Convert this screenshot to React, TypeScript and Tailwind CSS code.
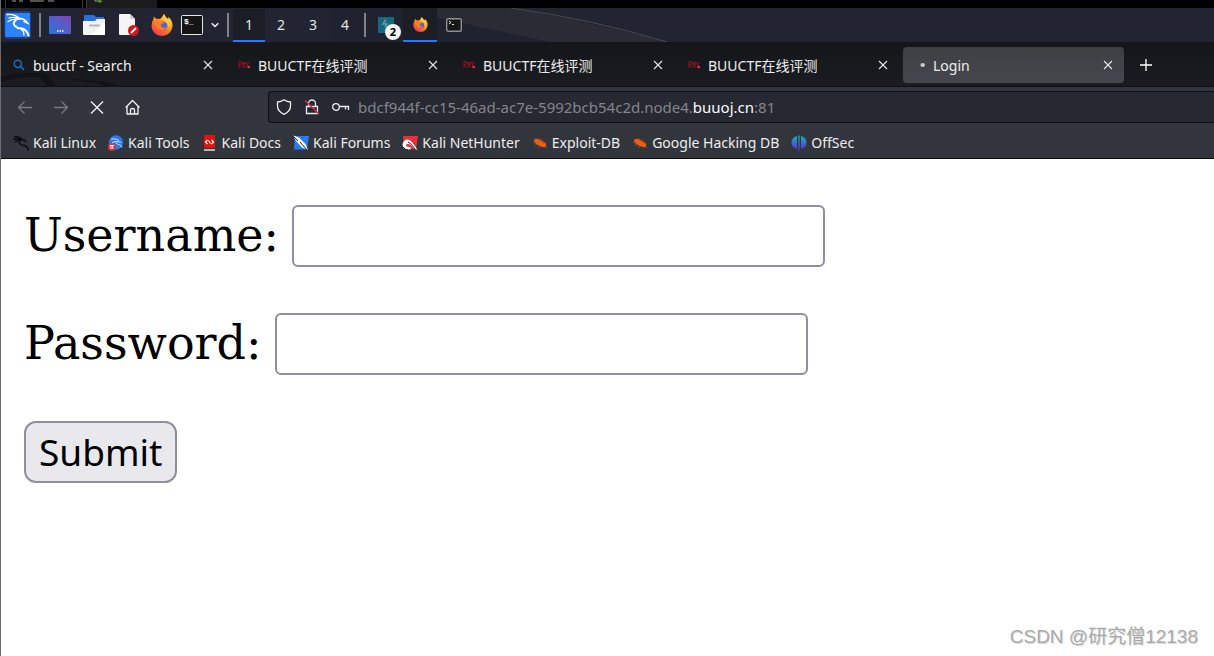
import type { ReactNode } from "react";

const TABS = [
  { title: "buuctf - Search", icon: "search" },
  { title: "BUUCTF在线评测", icon: "buu" },
  { title: "BUUCTF在线评测", icon: "buu" },
  { title: "BUUCTF在线评测", icon: "buu" },
  { title: "Login", icon: "dot", active: true },
];

const BOOKMARKS: { label: string; icon: ReactNode }[] = [
  { label: "Kali Linux", icon: <DragonIcon /> },
  { label: "Kali Tools", icon: <ToolsIcon /> },
  { label: "Kali Docs", icon: <DocsIcon /> },
  { label: "Kali Forums", icon: <ForumsIcon /> },
  { label: "Kali NetHunter", icon: <NetHunterIcon /> },
  { label: "Exploit-DB", icon: <BugIcon /> },
  { label: "Google Hacking DB", icon: <BugIcon /> },
  { label: "OffSec", icon: <OffSecIcon /> },
];

export default function App() {
  return (
    <div className="relative flex min-h-screen flex-col overflow-hidden border-l border-[#6b6b6b] bg-white font-['Noto_Sans','Noto_Sans_CJK_SC',sans-serif]">
      <WindowEdge />
      <Panel />
      <TabBar />
      <NavBar />
      <BookmarkBar />
      <LoginForm />
      <p className="absolute right-4 bottom-[7px] font-['Liberation_Sans','Noto_Sans_CJK_SC',sans-serif] text-[19px] leading-6 text-[#ababab] [text-shadow:1px_1px_0_#dcdcdc]">
        CSDN @研究僧12138
      </p>
    </div>
  );
}

/* ---------------- DESKTOP PANEL ---------------- */

function WindowEdge() {
  return (
    <div className="h-2 bg-black">
      <svg width="158" height="8" className="block">
        <path d="M4.500 0v8M81.500 0v8M85.500 0v8" stroke="#3a3a3a" />
        <path d="M86 0h70v8H86z" fill="#1b1b1b" />
        <path d="M11 1h4M18 1h4M29 1h14M47 1h6" stroke="#6d6d6d" strokeWidth="1.500" />
        <path d="M94 0v1h5" stroke="#9a9a9a" fill="none" />
        <path d="M98 0l4 1-4 2z" fill="#4caf1d" />
      </svg>
    </div>
  );
}

function Panel() {
  return (
    <header className="relative flex h-[34px] items-center bg-[#222431] text-sm text-[#e4e5e8]">
      <svg width="666" height="34" className="absolute top-0 left-0">
        <path d="M330 0H510Q580 12 666 34H330z" fill="#2a2b34" />
        <path d="M330 0H395Q470 18 550 34H330z" fill="#20222f" />
        <path d="M510 0Q590 11 666 34" stroke="#484a52" fill="none" />
      </svg>
      <div className="relative flex h-full items-center">
        <button aria-label="Applications" className="ml-[3px]">
          <KaliLogo />
        </button>
        <Separator />
        <div className="ml-2 flex items-center gap-3">
          <button aria-label="Show desktop"><DesktopIcon /></button>
          <button aria-label="Files"><FolderIcon /></button>
          <button aria-label="Text editor"><EditorIcon /></button>
          <button aria-label="Firefox"><FirefoxIcon size={22} /></button>
        </div>
        <button aria-label="Terminal" className="ml-2"><TerminalIcon /></button>
        <button aria-label="More terminals" className="ml-2">
          <svg width="8" height="6" viewBox="0 0 8 6" fill="none" stroke="#f2f2f2" strokeWidth="1.500">
            <path d="M.7 1.200 4 4.500 7.300 1.200" />
          </svg>
        </button>
        <Separator />
        <nav className="ml-1 flex h-full pt-px">
          {[1, 2, 3, 4].map((n) => (
            <button
              key={n}
              className={`w-8 border-b-2 ${
                n === 1 ? "border-[#2777ff] bg-[#1b1d27]" : "border-transparent"
              }`}
            >
              {n}
            </button>
          ))}
        </nav>
        <span className="ml-[3px] h-6 w-[2px] bg-[#808189]" />
        <button aria-label="Burp Suite, 2 windows" className="relative ml-3">
          <svg width="16" height="16" className="block">
            <path d="M0 0h16v16H0z" fill="#146a7c" />
            <path d="M8 2.500 5 7h4l-2 3.500" stroke="#6d9aa5" fill="none" strokeWidth="1.500" />
          </svg>
          <span className="absolute top-[7px] left-[7px] flex size-4 items-center justify-center rounded-full bg-[#f3f3f0] text-[11px] font-bold text-black">
            2
          </span>
        </button>
        <button
          aria-label="Firefox window"
          className="ml-[9px] flex h-full w-[34px] items-center justify-center border-b-2 border-[#2777ff] bg-[#1b1d27]"
        >
          <FirefoxIcon size={15} />
        </button>
        <button aria-label="Terminal window" className="ml-[9px]">
          <svg width="16" height="14" className="block">
            <rect x=".7" y=".7" width="14.600" height="12.600" rx="1.500" fill="#17181a" stroke="#8f8f8f" strokeWidth="1.400" />
            <path d="M3 3l2 1.500L3 6M6 6.500h2" stroke="#eee" fill="none" />
          </svg>
        </button>
      </div>
    </header>
  );
}

function Separator() {
  return <span className="ml-2 h-6 w-[2px] bg-[#808189]" />;
}

/* ---------------- BROWSER ---------------- */

function TabBar() {
  return (
    <div className="relative flex h-[45px] items-center gap-1 border-b border-[#0e0f12] bg-linear-to-b from-[#15161a] to-[#1b1c21] pt-[2px] pl-[2px] text-sm text-[#ededee]">
      <svg width="160" height="45" className="absolute top-0 left-0">
        <path d="M0 35Q20 29 44 31L56 45H47L38 35Q18 34 0 40z" fill="#121317" />
        <path d="M64 37Q100 37 122 45H108Q90 39 64 37z" fill="#121317" />
      </svg>
      {TABS.map((tab, i) => (
        <div
          key={i}
          className={`relative flex h-9 w-[221px] min-w-0 items-center gap-2 rounded pr-[11px] pl-[10px] ${
            tab.active ? "bg-linear-to-b from-[#3e3f43] to-[#45474e]" : ""
          }`}
        >
          <TabIcon kind={tab.icon} />
          <span className="flex-1 truncate pt-px">{tab.title}</span>
          <button aria-label="Close tab">
            <svg width="10" height="10" viewBox="0 0 10 10" className="block" stroke="#e6e6e6" strokeWidth="1.100">
              <path d="M1 1l8 8M9 1 1 9" />
            </svg>
          </button>
        </div>
      ))}
      <button aria-label="New tab" className="ml-3">
        <svg width="12" height="12" viewBox="0 0 12 12" className="block" stroke="#fff" strokeWidth="1.300">
          <path d="M6 0v12M0 6h12" />
        </svg>
      </button>
    </div>
  );
}

function TabIcon({ kind }: { kind: string }) {
  return (
    <svg width="12" height="12" viewBox="0 0 12 12" className="shrink-0" fill="none">
      {kind === "search" && (
        <>
          <circle cx="4.800" cy="4.800" r="3.600" stroke="#1673c4" strokeWidth="1.500" />
          <path d="M7.500 7.500 11 11" stroke="#1673c4" strokeWidth="1.700" />
        </>
      )}
      {kind === "buu" && (
        <>
          <path d="M1 9V2.500h2L3.500 5 1 6l2.500 2M5 9V3l1 3 1-3v6M8.500 3l1 3 1.500-3M9.500 5v4" stroke="#8c1224" />
          <circle cx="10.800" cy="8" r="1.200" fill="#e5384f" />
        </>
      )}
      {kind === "dot" && <ellipse cx="9.700" cy="6" rx="2.300" ry="2" fill="#c9c9cb" />}
    </svg>
  );
}

function NavBar() {
  return (
    <div className="flex h-10 items-center bg-[#33353d]">
      <div className="ml-4 flex w-[251px] items-center gap-5">
        <button aria-label="Back">
          <NavGlyph color="#797a80" d="M15 8.500H1.500M7.500 2.500l-6 6 6 6" />
        </button>
        <button aria-label="Forward">
          <NavGlyph color="#797a80" d="M1 8.500h13.500M8.500 2.500l6 6-6 6" />
        </button>
        <button aria-label="Stop">
          <NavGlyph color="#f4f4f4" d="M2 2.500l12 12M14 2.500l-12 12" />
        </button>
        <button aria-label="Home">
          <NavGlyph color="#f4f4f4" d="M.7 8.500 7.500 1.500l7 7M2 7.500V15h11V7.500M5.500 15v-4q0-1.500 2-1.500t2 1.500v4" />
        </button>
      </div>
      <div className="flex h-8 min-w-0 flex-1 items-center rounded-l border border-r-0 border-[#101116] bg-[#262832] pl-[7px]">
        <div className="flex shrink-0 items-center gap-3">
          <NavGlyph color="#f0f0f0" d="M8 .8Q11 3 14.500 3v4c0 4-2.500 6.500-6.500 8.300C4 13.500 1.500 11 1.500 7V3Q5 3 8 .8z" />
          <svg width="16" height="16" viewBox="0 0 16 16" fill="none" stroke="#e8e8e8" strokeWidth="1.300">
            <path d="M4.500 7V4.500a3.500 3.500 0 0 1 7 0V7M2.500 7.500h11v7h-11z" />
            <path d="M1 1.500l14 13.500" stroke="#e0274c" strokeWidth="1.500" />
          </svg>
          <svg width="18" height="16" viewBox="0 0 18 16" fill="none" stroke="#f0f0f0" strokeWidth="1.300">
            <circle cx="4" cy="8" r="3.300" />
            <path d="M7.500 7.500h9V11M13.500 7.500v3" />
          </svg>
        </div>
        <p className="ml-2 text-[15px] whitespace-nowrap text-[#85868c]">
          bdcf944f-cc15-46ad-ac7e-5992bcb54c2d.node4.
          <span className="text-[#fbfbfe]">buuoj.cn</span>:81
        </p>
      </div>
    </div>
  );
}

function NavGlyph({ d, color }: { d: string; color: string }) {
  return (
    <svg width="16" height="16" viewBox="0 0 16 16" className="block" fill="none" stroke={color} strokeWidth="1.300" strokeLinejoin="round">
      <path d={d} />
    </svg>
  );
}

function BookmarkBar() {
  return (
    <div className="flex h-8 items-center gap-3 border-b border-[#0c0c0e] bg-[#33353d] pl-3 text-sm whitespace-nowrap text-[#ededee]">
      {BOOKMARKS.map((b) => (
        <a key={b.label} href="#" className="flex items-center gap-1">
          {b.icon}
          {b.label}
        </a>
      ))}
    </div>
  );
}

/* ---------------- PAGE ---------------- */

function LoginForm() {
  return (
    <form className="flex flex-col items-start gap-[46px] px-[23px] pt-[46px] text-[46px] leading-[60px] text-black">
      <Field id="username" label="Username:" type="text" />
      <Field id="password" label="Password:" type="password" />
      <button
        type="button"
        className="h-[62px] rounded-xl border-2 border-[#8f8f9d] bg-[#e9e9ed] px-[13px] text-[37px] leading-[58px]"
      >
        Submit
      </button>
    </form>
  );
}

function Field({ id, label, type }: { id: string; label: string; type: string }) {
  return (
    <div className="flex items-start gap-[13px]">
      <label htmlFor={id} className="font-['DejaVu_Serif',serif]">
        {label}
      </label>
      <input
        id={id}
        type={type}
        className="h-[62px] w-[533px] rounded-md border-2 border-[#8f8f9d] bg-white px-2 text-[37px] outline-none"
      />
    </div>
  );
}

/* ---------------- ICONS ---------------- */

function DragonIcon() {
  return (
    <svg width="16" height="16" viewBox="0 0 16 16" fill="none" stroke="#0b0c0f" strokeWidth="1.500">
      <path d="M1 1.500Q6 1 9 4M0 4.500Q5 3 9 4.500M2 7Q5 5 9 4.500Q12 4.500 13 7M8 5Q5 7 7 9T12 10.500Q15 12 15.500 15.500" />
    </svg>
  );
}

function KaliLogo() {
  return (
    <svg width="27" height="30" viewBox="0 0 27 30" className="block" fill="none">
      <rect width="27" height="28" y="1" rx="4" fill="#1d3f7c" />
      <rect x="1" y="3" width="25" height="24" rx="2" fill="#2173f5" />
      <rect x="2" y="3" width="24" height="24" fill="#2b82fb" />
      <g stroke="#fff" strokeLinecap="round">
        <path d="M3 4.500Q10 3.500 16 8.500M4 11.500Q9 8 15 9M5 8Q10 6.500 15 8.500" strokeWidth="1.300" />
        <path d="M14 9Q20 7.500 23.500 13L20 11.500" strokeWidth="1.600" />
        <path d="M12 10Q8 13 11 16T18 18.500Q23 20 24.500 25.500" strokeWidth="2" />
        <path d="M17 19Q20 21 20 25" strokeWidth="1.300" />
      </g>
    </svg>
  );
}

function DesktopIcon() {
  return (
    <svg width="22" height="18" className="block">
      <defs>
        <linearGradient id="desk" x1="0" y1="1" x2="1" y2="0">
          <stop stopColor="#2d76dc" />
          <stop offset="1" stopColor="#7b46b4" />
        </linearGradient>
      </defs>
      <rect width="22" height="18" rx="1" fill="url(#desk)" />
      <path d="M8 15h1.500M10.500 15H12M13 15h1.500" stroke="#fff" strokeWidth="1.500" />
    </svg>
  );
}

function FolderIcon() {
  return (
    <svg width="22" height="20" className="block">
      <path d="M1 1q0-1 1-1h9l2 2h8v8H1z" fill="#2c6fe0" />
      <path d="M0 6h12l2-2h8v15q0 1-1 1H1q-1 0-1-1z" fill="#f2f2f2" />
      <path d="M22 7v13H8z" fill="#fff" />
      <path d="M7 10.500h9" stroke="#b5b5b5" strokeWidth="2" strokeLinecap="round" />
    </svg>
  );
}

function EditorIcon() {
  return (
    <svg width="22" height="22" className="block">
      <path d="M3 0h10l5 5v16H3q-1 0-1-1V1q0-1 1-1z" fill="#f5f5f5" />
      <path d="M13 0v5h5z" fill="#cfcfcf" />
      <circle cx="16.500" cy="16.500" r="5.500" fill="#d01720" />
      <path d="M14 19l5-5" stroke="#fff" strokeWidth="1.800" />
    </svg>
  );
}

function TerminalIcon() {
  return (
    <svg width="22" height="20" className="block">
      <rect x=".5" y=".5" width="21" height="19" rx="1" fill="#141414" stroke="#e8e8e8" />
      <text x="3" y="9" fontSize="8" fontWeight="bold" fill="#fff" fontFamily="Liberation Mono, monospace">
        $_
      </text>
    </svg>
  );
}

function FirefoxIcon({ size }: { size: number }) {
  return (
    <svg width={size} height={size} viewBox="0 0 22 22" className="block">
      <defs>
        <linearGradient id="fox" x1=".8" y1=".1" x2=".2" y2="1">
          <stop stopColor="#ffd83d" />
          <stop offset=".45" stopColor="#ff8a1e" />
          <stop offset="1" stopColor="#ee2f52" />
        </linearGradient>
      </defs>
      <path d="M13 0q1 2.500 4 5l.5-2Q22 7 21.500 12.500 20 21.500 11 22 1.500 21.500.5 12.500.3 8 2.500 5l.3-2.500L5.500 5q2-.7 3.500 0Q11 3.500 13 0z" fill="url(#fox)" />
      <circle cx="11.500" cy="12" r="4.800" fill="#4f63d8" />
      <path d="M4 7q2-1.500 5-.5l3 1q2 .5 1.500 1.500L10 10q-.5 2.500 1.500 3.500 2 .7 4-.5-1 3.500-5 3.500Q4 15 4 7z" fill="#ff7c22" />
      <path d="M13 0q1 3 4 5.500 3 4 1 9-.5-5-4-7T13 0z" fill="#ffc83a" />
    </svg>
  );
}

function ToolsIcon() {
  return (
    <svg width="16" height="16" viewBox="0 0 16 16" fill="none">
      <circle cx="8" cy="7.500" r="7.200" fill="#2a78f0" />
      <path d="M3 4q5-1 8 1.500M4 7.500q4-2.500 9 0M8 6.500q0 3 2.500 3t3.500 3" stroke="#cfe0ff" />
      <circle cx="3.800" cy="12" r="3.800" fill="#e2343c" />
      <path d="M1.800 10.500h4M3 10.500v3.500M4.700 10.500v3.500" stroke="#fff" />
    </svg>
  );
}

function DocsIcon() {
  return (
    <svg width="16" height="16" viewBox="0 0 16 16" fill="none">
      <path d="M2 0h11v13H2z" fill="#db1414" />
      <path d="M1.500 0v14" stroke="#8e0d12" />
      <path d="M2 15h11" stroke="#e2dede" strokeWidth="1.500" />
      <path d="M5.500 5 3.500 7l2 2M9.500 5l2 2-2 2M6.500 5.500l2 3" stroke="#fff" strokeWidth="1.200" />
    </svg>
  );
}

function ForumsIcon() {
  return (
    <svg width="16" height="16" viewBox="0 0 16 16" fill="none">
      <path d="M2 1h14l-2 13.500H1z" fill="#2b7bf2" />
      <path d="M0 .5 6 2.500 12.500 9l2.500 6-6-2.500L3 6z" fill="#f8f8f8" />
      <path d="M0 1l5 5M7 7l7 8" stroke="#23252c" />
    </svg>
  );
}

function NetHunterIcon() {
  return (
    <svg width="16" height="16" viewBox="0 0 16 16" fill="none">
      <path d="M1 1h15l-2 13H2z" fill="#e9303a" />
      <path d="M.5 10Q1 4.500 6 4.500q3.500.5 9.500 10.500L12 13.500 8 9.500Q4 7.500 4 10.500q1.500 2 4 1.500l1 2q-7 2-8.500-4z" fill="#fff" />
      <path d="M6 7Q9 8 13 14M1 12q2 3 5 3" stroke="#23252c" />
    </svg>
  );
}

function BugIcon() {
  return (
    <svg width="16" height="16" viewBox="0 0 16 16" fill="none">
      <path d="M2 5q2-2 5-.5l5 2.500q3 1.500 2 4.500-3 1.500-6-.5L4 9Q1.500 7.500 2 5z" fill="#ef5d12" />
      <path d="M1 7.500l3-.5M7 3l0 2M10 4l0 3M3 10.500l3-1.500M6 13l2-2M13 7l-2 1.500M13 12l2 .5" stroke="#a64a1c" />
    </svg>
  );
}

function OffSecIcon() {
  return (
    <svg width="16" height="16" viewBox="0 0 16 16" fill="none">
      <defs>
        <linearGradient id="offsec" x1="0" y1="0" x2="0" y2="1">
          <stop stopColor="#19b3bd" />
          <stop offset="1" stopColor="#5a23d6" />
        </linearGradient>
      </defs>
      <path d="M6 1v13Q.5 12.500.5 7.500T6 1zM10 1v13q5.500-1.500 5.500-6.500T10 1zM7.300.5h1.400V16H7.300z" fill="url(#offsec)" />
    </svg>
  );
}
